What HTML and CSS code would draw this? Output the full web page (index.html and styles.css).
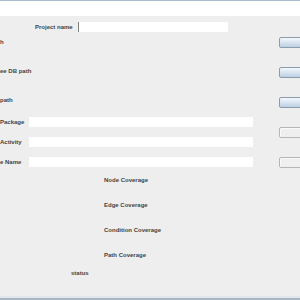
FILE: index.html
```html
<!DOCTYPE html>
<html lang="en">
<head>
  <meta charset="UTF-8">
  <title>Coverage</title>
  <link rel="stylesheet" href="styles.css">
</head>
<body>
  <div class="titlebar"></div>

  <div class="window">
    <!-- form fields -->
    <div class="form">
      <div class="row project">
        <label class="lbl">Project name</label>
        <div class="field"><span class="caret"></span></div>
      </div>

      <div class="row path first"><label class="lbl">h</label></div>
      <div class="row path"><label class="lbl">ee DB path</label></div>
      <div class="row path"><label class="lbl">path</label></div>

      <div class="row entry first">
        <label class="lbl">Package</label>
        <div class="field wide"></div>
      </div>
      <div class="row entry">
        <label class="lbl">Activity</label>
        <div class="field wide"></div>
      </div>
      <div class="row entry">
        <label class="lbl">e Name</label>
        <div class="field wide"></div>
      </div>

      <div class="row cov first">Node Coverage</div>
      <div class="row cov">Edge Coverage</div>
      <div class="row cov">Condition Coverage</div>
      <div class="row cov">Path Coverage</div>

      <div class="row status">status</div>
    </div>

    <!-- browse buttons -->
    <div class="buttons">
      <button class="btn"></button>
      <button class="btn"></button>
      <button class="btn"></button>
      <button class="btn off"></button>
      <button class="btn off"></button>
    </div>
  </div>

  <div class="statusbar"></div>
</body>
</html>
```

FILE: styles.css
```css
body {
  margin: 0;
  width: 300px;
  height: 300px;
  overflow: hidden;
  background: #eeeeee;
  font-family: "Liberation Sans", Arial, sans-serif;
  font-size: 6px;
  font-weight: bold;
  color: #444444;
}

.titlebar {
  height: 15px;
  background: #ffffff;
  border-top: 1px solid #a9bdd2;
}

.window {
  display: flex;
  height: 280px;
}

.form {
  width: 279px;
  display: flex;
  flex-direction: column;
}

.row {
  height: 10px;
  line-height: 10px;
  display: flex;
  white-space: nowrap;
}

.field {
  background: #ffffff;
  height: 10px;
  position: relative;
}

.caret {
  position: absolute;
  left: -1px;
  top: 0;
  width: 1px;
  height: 10px;
  background: #808080;
}

/* project name */
.project {
  margin-top: 6px;
  padding-left: 35px;
}

.project .lbl {
  width: 44px;
}

.project .field {
  width: 149px;
}

/* path rows with a browse button */
.path {
  margin-top: 19px;
}

.path.first {
  margin-top: 5px;
}

/* package / activity / name */
.entry {
  margin-top: 10px;
}

.entry.first {
  margin-top: 12px;
}

.entry .lbl {
  width: 29px;
}

.entry .field.wide {
  width: 224px;
}

/* coverage results */
.cov {
  padding-left: 104px;
  margin-top: 15px;
}

.cov.first {
  margin-top: 8px;
}

.status {
  padding-left: 71px;
  margin-top: 8px;
}

.buttons {
  width: 21px;
  overflow: hidden;
  padding-top: 21px;
  display: flex;
  flex-direction: column;
  gap: 19px;
}

.btn {
  width: 40px;
  height: 11px;
  padding: 0;
  border: 1px solid #8d9cad;
  border-radius: 2px;
  background: linear-gradient(#f4f8fc, #bccfe3);
  flex: none;
}

.btn.off {
  border-color: #b5b5b5;
  background: #efefef;
  box-shadow: inset 1px 1px 0 #fafafa;
}

.statusbar {
  height: 2px;
  background: #dfe6ec;
  border-bottom: 2px solid #a9b5c0;
}
```
